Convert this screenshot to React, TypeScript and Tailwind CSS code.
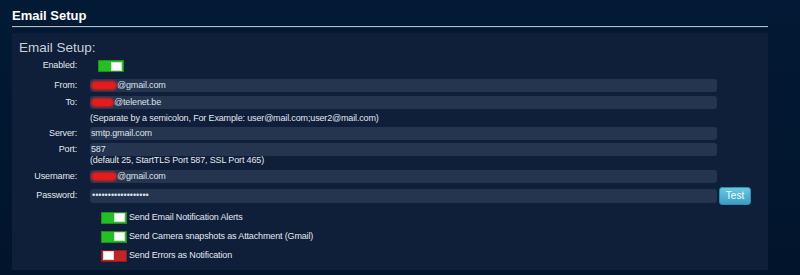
import { ReactNode } from "react";

function Toggle({ on }: { on: boolean }) {
    return (
        <div
            className={
                on
                    ? "w-[26px] h-[12px] flex items-center justify-end px-[1px] border border-[#1a8f1a] bg-[#22c022]"
                    : "w-[26px] h-[12px] flex items-center justify-start px-[1px] border border-[#8f1a1a] bg-[#c42424]"
            }
        >
            <div className="w-[11px] h-[9px] bg-white border border-[#d8d8d8]" />
        </div>
    );
}

function Redacted({ w }: { w: string }) {
    return (
        <span className={`inline-block ${w} h-[9px] rounded-full bg-[#e81c1c] blur-[1px] text-[#e81c1c] overflow-hidden leading-[9px]`}>
            xxxx
        </span>
    );
}

function Row({ label, children, className }: { label: string; children: ReactNode; className: string }) {
    return (
        <div className={`flex items-center ${className}`}>
            <div className="w-[65px] text-right text-[#e4e8ee]">{label}</div>
            <div className="ml-[13px] flex items-center">{children}</div>
        </div>
    );
}

function Field({ children }: { children: ReactNode }) {
    return (
        <div className="w-[627px] h-[13px] rounded-[3px] bg-[#26354f] flex items-center px-[1px] text-[#dde2e8] leading-[13px]">
            {children}
        </div>
    );
}

export default function App() {
    return (
        <div
            className="w-[800px] h-[275px] overflow-hidden bg-gradient-to-b from-[#021a35] to-[#02142c] text-[9px] tracking-[-0.15px]"
            style={{ fontFamily: '"Liberation Sans", Arial, sans-serif' }}
        >
            <div className="ml-[12px] w-[756px] pt-[8px] tracking-normal">
                <h1 className="text-[13px] leading-[16px] font-bold text-white">Email Setup</h1>
                <div className="mt-[2px] h-[1px] bg-[#b4bcc8]" />
                <div className="h-[1px] bg-[#1c2a40]" />
            </div>

            <div className="ml-[12px] mt-[5px] w-[756px] bg-[#0f1e39] pt-[5px] pb-[5px]">
                <div className="pl-[7px] text-[13.5px] leading-[20px] text-[#c9d0da] tracking-normal">Email Setup:</div>

                <Row label="Enabled:" className="h-[14px] mt-[1px]">
                    <div className="ml-[8px]">
                        <Toggle on />
                    </div>
                </Row>

                <Row label="From:" className="h-[13px] mt-[6px]">
                    <Field>
                        <Redacted w="w-[26px]" />
                        <span>@gmail.com</span>
                    </Field>
                </Row>

                <Row label="To:" className="h-[13px] mt-[4px]">
                    <Field>
                        <Redacted w="w-[23px]" />
                        <span>@telenet.be</span>
                    </Field>
                </Row>

                <div className="h-[18px] leading-[18px] pl-[78px] text-[#e4e8ee]">
                    (Separate by a semicolon, For Example: user@mail.com;user2@mail.com)
                </div>

                <Row label="Server:" className="h-[13px]">
                    <Field>smtp.gmail.com</Field>
                </Row>

                <Row label="Port:" className="h-[13px] mt-[3px]">
                    <Field>587</Field>
                </Row>

                <div className="h-[9px] leading-[9px] pl-[78px] text-[#e4e8ee]">
                    (default 25, StartTLS Port 587, SSL Port 465)
                </div>

                <Row label="Username:" className="h-[13px] mt-[5px]">
                    <Field>
                        <Redacted w="w-[26px]" />
                        <span>@gmail.com</span>
                    </Field>
                </Row>

                <Row label="Password:" className="h-[18px] mt-[4px]">
                    <div className="w-[627px] h-[14px] rounded-[3px] bg-[#26354f] flex items-center px-[2px] text-[#dde2e8] tracking-normal">
                        ••••••••••••••••••
                    </div>
                    <button
                        type="button"
                        className="ml-[2px] w-[32px] h-[18px] rounded-[3px] border border-[#2d8db0] bg-gradient-to-b from-[#66c9e4] to-[#3a9ec4] text-white text-[10px] leading-[16px] tracking-normal"
                    >
                        Test
                    </button>
                </Row>

                <div className="mt-[3px]">
                    {[
                        { on: true, text: "Send Email Notification Alerts" },
                        { on: true, text: "Send Camera snapshots as Attachment (Gmail)" },
                        { on: false, text: "Send Errors as Notification" },
                    ].map(opt => (
                        <div key={opt.text} className="h-[19px] flex items-center pl-[89px]">
                            <Toggle on={opt.on} />
                            <span className="ml-[2px] text-[#e4e8ee]">{opt.text}</span>
                        </div>
                    ))}
                </div>
            </div>
        </div>
    );
}
